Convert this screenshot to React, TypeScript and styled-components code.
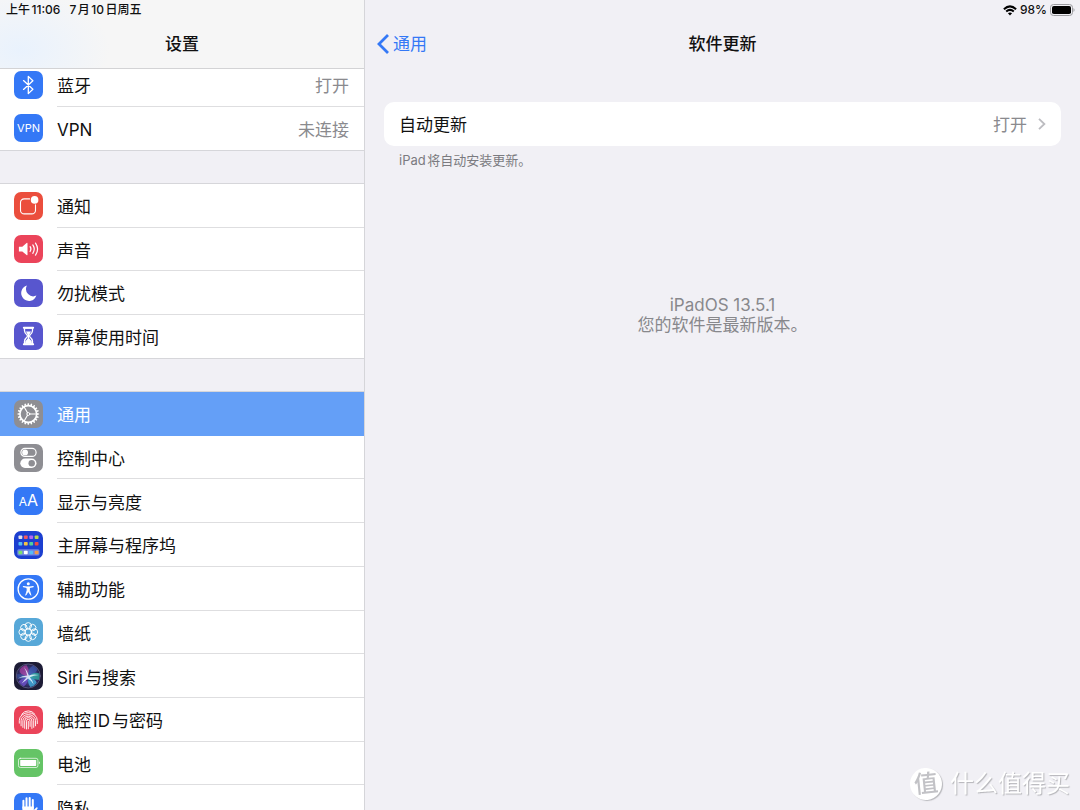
import React from 'react';
import styled, { createGlobalStyle, css } from 'styled-components';

const GlobalStyle = createGlobalStyle`
  *, *::before, *::after { box-sizing: border-box; }
  body {
    margin: 0;
    background: #f1f0f5;
    color: #111;
    font-family: Inter, "Noto Sans CJK SC", "Liberation Sans", sans-serif;
    font-size: 17px;
    line-height: 20px;
    text-autospace: normal;
  }
  h1, h2, p, ul { margin: 0; padding: 0; font: inherit; }
  ul { list-style: none; }
  a { color: inherit; text-decoration: none; }
  button { border: 0; background: none; padding: 0; font: inherit; color: inherit; }
  svg { display: block; }
`;

const Screen = styled.div`
  display: flex;
  height: 100vh;
  overflow: hidden;
`;

const Sidebar = styled.aside`
  display: flex;
  flex-direction: column;
  flex: none;
  width: 365px;
  border-right: 1px solid #d5d5d9;
  overflow: hidden;
`;

const SidebarHeader = styled.header`
  position: relative;
  z-index: 1;
  flex: none;
  height: 69px;
  border-bottom: 1px solid #d3d3d5;
  background:
    radial-gradient(ellipse 90px 60px at 20px 50px, #e9f2fd, rgba(233, 242, 253, 0)),
    #f6f6f6;
`;

const StatusBar = styled.div<{ $end?: boolean }>`
  display: flex;
  align-items: center;
  justify-content: ${p => (p.$end ? 'flex-end' : 'flex-start')};
  gap: ${p => (p.$end ? '3px' : '9px')};
  height: 20px;
  padding: 0 5px 0 6px;
  font-size: 12px;
  line-height: 20px;
  font-weight: 500;
`;

const NavBar = styled.div`
  display: grid;
  grid-template-columns: 1fr auto 1fr;
  align-items: center;
  height: 48px;
  padding: 0 12px;
`;

const Title = styled.h1`
  grid-column: 2;
  font-weight: 500;
`;

const BackLink = styled.a`
  display: flex;
  align-items: center;
  gap: 4px;
  color: #3478f6;
`;

const Menu = styled.nav`
  display: flex;
  flex-direction: column;
  gap: 34px;
  margin-top: -6px;
`;

const Group = styled.ul<{ $height: number }>`
  display: grid;
  flex: none;
  grid-auto-rows: minmax(43px, 1fr);
  min-height: ${p => p.$height}px;
  background: #fff;
  box-shadow: 0 -1px #d6d6da, 0 1px #d6d6da;
`;

const Row = styled.a<{ $selected?: boolean }>`
  display: flex;
  height: 100%;
  padding-left: 14px;
  gap: 14px;
  align-items: center;
  ${p => p.$selected && css`
    background: #649ff7;
    color: #fff;
  `}
`;

const RowBody = styled.span<{ $line: boolean }>`
  display: flex;
  flex: 1;
  align-items: center;
  justify-content: space-between;
  height: 100%;
  padding: 4px 15px 0 0;
  border-bottom: 1px solid ${p => (p.$line ? '#dedee0' : 'transparent')};
`;

const Value = styled.span`
  color: #8a8a8e;
`;

const Tile = styled.span<{ $bg: string }>`
  display: flex;
  flex: none;
  align-items: center;
  justify-content: center;
  width: 29px;
  height: 28px;
  border-radius: 7px;
  background: ${p => p.$bg};
  color: #fff;
  overflow: hidden;
`;

const TileText = styled.span<{ $size: number }>`
  font-size: ${p => p.$size}px;
  line-height: 28px;
`;

const BigLetter = styled.span`
  font-size: 16px;
`;

const Detail = styled.main`
  display: flex;
  flex: 1;
  flex-direction: column;
  min-width: 0;
`;

const DetailBody = styled.div`
  padding: 34px 19px 0;
`;

const Card = styled.button`
  display: flex;
  align-items: center;
  width: 100%;
  height: 44px;
  padding: 0 15px;
  border-radius: 10px;
  background: #fff;
  text-align: left;
`;

const CardLabel = styled.span`
  flex: 1;
  padding-top: 2px;
`;

const CardValue = styled(Value)`
  padding-top: 2px;
  margin-right: 11px;
`;

const Note = styled.p`
  padding: 4px 15px 0;
  color: #7b7b80;
  font-size: 13px;
`;

const Version = styled.div`
  margin-top: 125px;
  text-align: center;
  color: #88888c;
`;

const Watermark = styled.div`
  position: fixed;
  right: 10px;
  bottom: 9px;
  display: flex;
  align-items: center;
  gap: 8px;
  color: #fff;
  font-size: 24px;
  line-height: 34px;
  text-shadow: 1px 1px 1px #b4b4b8;
`;

const Seal = styled.span`
  display: grid;
  place-items: center;
  width: 32px;
  height: 32px;
  border-radius: 50%;
  background: #fff;
  box-shadow: 1px 1px 1px #b9b9bd;
  color: #c2c2c6;
  line-height: 32px;
  font-weight: 500;
  text-shadow: none;
  transform: rotate(-6deg);
`;

const Glyph = ({ children }: { children: React.ReactNode }) => (
  <svg width="29" height="28" viewBox="-0.3 0 29 28" fill="none" stroke="#fff" strokeWidth="1.2"
    strokeLinecap="round" strokeLinejoin="round" aria-hidden="true">{children}</svg>
);

const BluetoothIcon = () => (
  <Glyph><path strokeWidth="1.3" d="M9.2 9.6 18.6 18.2 14 22.6V5.4L18.6 9.8 9.2 18.4" /></Glyph>
);

const NotificationIcon = () => (
  <Glyph>
    <path strokeWidth="1.1" d="M15.3 6.9H9.9A3.7 3.7 0 0 0 6.2 10.6V18.2A3.7 3.7 0 0 0 9.9 21.9H17.5A3.7 3.7 0 0 0 21.2 18.2V12.8" />
    <circle cx="20.3" cy="7.9" r="3.8" fill="#fff" stroke="none" />
  </Glyph>
);

const SoundIcon = () => (
  <Glyph>
    <path d="M4.6 11.7H8L12.3 8Q13.2 7.5 13.2 8.6V19.6Q13.2 20.6 12.3 20L8 16.4H4.6Z" fill="#fff" stroke="none" />
    <path d="M15.8 11.7Q17.5 14.1 15.8 16.5M18.5 9.9Q21.4 14.1 18.5 18.3M21.2 8.1Q25.4 14.1 21.2 20.1" />
  </Glyph>
);

const MoonIcon = () => (
  <Glyph><path fill="#fff" stroke="none" d="M12.6 6.6A7.8 7.8 0 1 0 22.1 16.6 7.3 7.3 0 0 1 12.6 6.6Z" /></Glyph>
);

const HourglassIcon = () => (
  <Glyph>
    <path strokeWidth="1.9" d="M9.5 5.8H18.9M9.5 22.2H18.9" />
    <path strokeWidth="1.3" d="M10.2 6V8.8Q10.2 11 13 13.3V14.7Q10.2 17 10.2 19.2V22H18.2V19.2Q18.2 17 15.4 14.7V13.3Q18.2 11 18.2 8.8V6Z" />
    <path fill="#fff" stroke="none" d="M11.6 9.6H16.8L14.8 13V16.2L17.5 19.4V21.5H10.9V19.4L13.6 16.2V13Z" />
  </Glyph>
);

const teeth = Array.from({ length: 20 }, (_, i) => i * 18);
const GearIcon = () => (
  <Glyph>
    <circle cx="14" cy="14" r="8.4" strokeWidth="1.7" />
    {teeth.map(a => (
      <path key={a} d="M13.4 3.2H14.6L15 5.4H13Z" fill="#fff" stroke="none" transform={`rotate(${a} 14 14)`} />
    ))}
    <circle cx="14" cy="14" r="1.5" strokeWidth="1" />
    <path d="M15.5 14H22M13.2 12.7 10 7.2M13.2 15.3 10 20.8" />
  </Glyph>
);

const ControlIcon = () => (
  <Glyph>
    <rect x="6.6" y="4.4" width="15.2" height="8" rx="4" />
    <circle cx="10.8" cy="8.4" r="2.9" fill="#fff" stroke="none" />
    <rect x="6" y="14.6" width="16.2" height="9.4" rx="4.7" fill="#fff" stroke="none" />
    <circle cx="17.4" cy="19.3" r="3.2" fill="#8e8e93" stroke="none" />
  </Glyph>
);

const apps = [
  ['#dfe0ea', '#f2585f', '#b266f2', '#b8d94e'],
  ['#54bdf7', '#f6c343', '#53cf9b', '#ef4a42'],
  ['#7ce06d', '#ffffff', '#54bdf7', '#f39a4c'],
];
const rowTops = [4.4, 11, 19.7];
const HomeIcon = () => (
  <Glyph>
    <rect x="3" y="18.3" width="22.2" height="6.2" rx="1.5" fill="#6f86e3" stroke="none" />
    {apps.map((row, y) => row.map((color, x) => (
      <rect key={color + x} x={4.2 + x * 5.4} y={rowTops[y]} width="3.8" height="3.6" rx="0.8" fill={color} stroke="none" />
    )))}
  </Glyph>
);

const AccessibilityIcon = () => (
  <Glyph>
    <circle cx="14" cy="14" r="10.2" strokeWidth="1.3" />
    <circle cx="14" cy="8.7" r="1.5" fill="#fff" stroke="none" />
    <path strokeWidth="1.4" d="M9.2 11.6 12.7 12.3H15.3L18.8 11.6" />
    <path fill="#fff" strokeWidth="0.8" d="M12.8 12.3H15.2V15.4L16.6 20.3 14 16.4 11.4 20.3 12.8 15.4Z" />
  </Glyph>
);

const petals = [0, 45, 90, 135, 180, 225, 270, 315];
const WallpaperIcon = () => (
  <Glyph>
    <circle cx="14" cy="14" r="3.2" strokeWidth="0.9" />
    {petals.map(a => (
      <circle key={a} cx="14" cy="7.8" r="3.2" strokeWidth="0.9" transform={`rotate(${a} 14 14)`} />
    ))}
  </Glyph>
);

const SiriIcon = () => (
  <Glyph>
    <defs>
      <radialGradient id="siri-orb">
        <stop offset="0" stopColor="#6b9ad8" />
        <stop offset="0.6" stopColor="#3d3a80" />
        <stop offset="1" stopColor="#22224a" />
      </radialGradient>
    </defs>
    <circle cx="14" cy="14" r="12" fill="url(#siri-orb)" stroke="#6d6a92" strokeWidth="0.7" />
    <g stroke="none">
      <path d="M14 15Q4 12 5.4 7.4Q8 3.4 12.4 3.2Q15.4 8 14 15Z" fill="#a8409f" opacity="0.75" />
      <path d="M14 15Q13 7 18.6 3.6Q22.4 5.4 23 8Q20 13 14 15Z" fill="#3d5cb4" opacity="0.7" />
      <path d="M14 15Q20 8.6 25 11.6Q25.8 15.2 24.4 18Q19 17.4 14 15Z" fill="#2fb3a4" opacity="0.75" />
      <path d="M14 15Q22 17 22.4 21Q19.6 24.6 16 25Q13 21 14 15Z" fill="#3fa6d4" opacity="0.85" />
      <path d="M14 15Q13.4 22 9.4 24.4Q5.6 22.4 4.4 19.6Q8 15.6 14 15Z" fill="#6b4fc4" opacity="0.85" />
      <path d="M14 15Q8 18 3 16.6Q2.4 14 3 12Q9 12 14 15Z" fill="#3c5aa8" opacity="0.6" />
      <path d="M9.6 5Q13.6 9.6 14.6 13.4Q19 11.6 24.6 13Q19 13.6 15.6 15.2Q18.2 18.4 19.4 22.4Q16.6 18.4 13.8 16.6Q11 19 7.4 21.6Q9.6 17.8 12.4 15.4Q8 15 3.6 16.4Q8 13.4 13 13.4Q12 9 9.6 5Z" fill="#e8f6ff" opacity="0.85" />
    </g>
  </Glyph>
);

const FingerprintIcon = () => (
  <Glyph>
    <g strokeWidth="0.9">
      <path d="M7.4 8.2Q10 4.9 14 4.9T20.6 8.2" />
      <path d="M5 17.2V14.6A9 7.9 0 0 1 23 14.6V17.6" />
      <path d="M6.8 19.8V14.7A7.2 6.1 0 0 1 21.2 14.7V19.8" />
      <path d="M8.6 21.4V14.8A5.4 4.6 0 0 1 19.4 14.8V21.4" />
      <path d="M10.4 22.4V15A3.6 3.4 0 0 1 17.6 15V22.4" />
      <path d="M12.2 23V15.2A1.8 1.9 0 0 1 15.8 15.2V20.4M14 15.4V22.8" />
    </g>
  </Glyph>
);

const BatteryIcon = () => (
  <Glyph>
    <rect x="4.2" y="9.3" width="19.4" height="9.2" rx="1.8" strokeWidth="0.7" />
    <rect x="5.9" y="10.9" width="16" height="6" rx="0.6" fill="#fff" stroke="none" />
    <path d="M24.6 12.3Q26.4 13.8 24.6 15.3Z" fill="#fff" stroke="none" />
  </Glyph>
);

const HandIcon = () => (
  <Glyph>
    <path strokeWidth="2" d="M9.1 15V7.8M12.2 14V5.2M15.4 14V5M18.5 15V7" />
    <path d="M8.1 13.5H19.5V17L22 14.6Q23.4 13.8 23.3 15.4L19.5 21.4Q17.5 24 14 24Q8.1 23 8.1 17.5Z" fill="#fff" stroke="none" />
  </Glyph>
);

type Item = { label: string; bg: string; icon: React.ReactNode; value?: string; selected?: boolean };

const groups: { height: number; items: Item[] }[] = [
  {
    height: 87,
    items: [
      { label: '蓝牙', bg: '#3478f6', icon: <BluetoothIcon />, value: '打开' },
      { label: 'VPN', bg: '#3478f6', icon: <TileText $size={11}>VPN</TileText>, value: '未连接' },
    ],
  },
  {
    height: 174,
    items: [
      { label: '通知', bg: '#eb4e3d', icon: <NotificationIcon /> },
      { label: '声音', bg: '#eb445a', icon: <SoundIcon /> },
      { label: '勿扰模式', bg: '#5856ce', icon: <MoonIcon /> },
      { label: '屏幕使用时间', bg: '#5856ce', icon: <HourglassIcon /> },
    ],
  },
  {
    height: 437,
    items: [
      { label: '通用', bg: '#8e8e93', icon: <GearIcon />, selected: true },
      { label: '控制中心', bg: '#8e8e93', icon: <ControlIcon /> },
      { label: '显示与亮度', bg: '#3478f6', icon: <TileText $size={12}>A<BigLetter>A</BigLetter></TileText> },
      { label: '主屏幕与程序坞', bg: '#1c3fd0', icon: <HomeIcon /> },
      { label: '辅助功能', bg: '#3478f6', icon: <AccessibilityIcon /> },
      { label: '墙纸', bg: '#57a8d8', icon: <WallpaperIcon /> },
      { label: 'Siri与搜索', bg: '#1d1c36', icon: <SiriIcon /> },
      { label: '触控ID与密码', bg: '#eb445a', icon: <FingerprintIcon /> },
      { label: '电池', bg: '#65c466', icon: <BatteryIcon /> },
      { label: '隐私', bg: '#3478f6', icon: <HandIcon /> },
    ],
  },
];

export default function App() {
  return (
    <Screen>
      <GlobalStyle />
      <Sidebar>
        <SidebarHeader>
          <StatusBar><span>上午11:06</span><span>7月10日周五</span></StatusBar>
          <NavBar><Title>设置</Title></NavBar>
        </SidebarHeader>
        <Menu aria-label="设置">
          {groups.map(group => (
            <Group key={group.height} $height={group.height}>
              {group.items.map((item, i) => (
                <li key={item.label}>
                  <Row href="#" $selected={item.selected} aria-current={item.selected ? 'page' : undefined}>
                    <Tile $bg={item.bg}>{item.icon}</Tile>
                    <RowBody $line={!item.selected && i < group.items.length - 1}>
                      <span>{item.label}</span>
                      {item.value && <Value>{item.value}</Value>}
                    </RowBody>
                  </Row>
                </li>
              ))}
            </Group>
          ))}
        </Menu>
      </Sidebar>
      <Detail>
        <StatusBar $end>
          <svg width="14" height="11" viewBox="0 0 14 11" fill="none" stroke="#000" strokeWidth="2" aria-hidden="true">
            <path d="M0.9 4.2Q7-1.5 13.1 4.2M3.2 6.6Q7 3.1 10.8 6.6" />
            <path d="M4.9 8.2Q7 6.6 9.1 8.2L7 10.6Z" fill="#000" stroke="none" />
          </svg>
          <span>98%</span>
          <svg width="25" height="12" viewBox="0 0 25 12" aria-hidden="true">
            <rect x="0.5" y="0.5" width="22" height="11" rx="3" fill="none" stroke="#9b9b9f" />
            <rect x="2" y="2" width="19" height="8" rx="1.8" fill="#000" />
            <path d="M23.5 4Q25.6 6 23.5 8Z" fill="#9b9b9f" />
          </svg>
        </StatusBar>
        <NavBar>
          <BackLink href="#">
            <svg width="12" height="20" viewBox="0 0 12 20" fill="none" stroke="currentColor" strokeWidth="2.8" aria-hidden="true">
              <path d="M11 1 2 10 11 19" />
            </svg>
            通用
          </BackLink>
          <Title as="h2">软件更新</Title>
        </NavBar>
        <DetailBody>
          <Card type="button">
            <CardLabel>自动更新</CardLabel>
            <CardValue>打开</CardValue>
            <svg width="8" height="12" viewBox="0 0 8 12" fill="none" stroke="#bcbcc0" strokeWidth="1.8" aria-hidden="true">
              <path d="M1 0.8 6.4 6 1 11.2" />
            </svg>
          </Card>
          <Note>iPad将自动安装更新。</Note>
          <Version>
            <p>iPadOS 13.5.1</p>
            <p>您的软件是最新版本。</p>
          </Version>
        </DetailBody>
      </Detail>
      <Watermark>
        <Seal>值</Seal>
        <span>什么值得买</span>
      </Watermark>
    </Screen>
  );
}
